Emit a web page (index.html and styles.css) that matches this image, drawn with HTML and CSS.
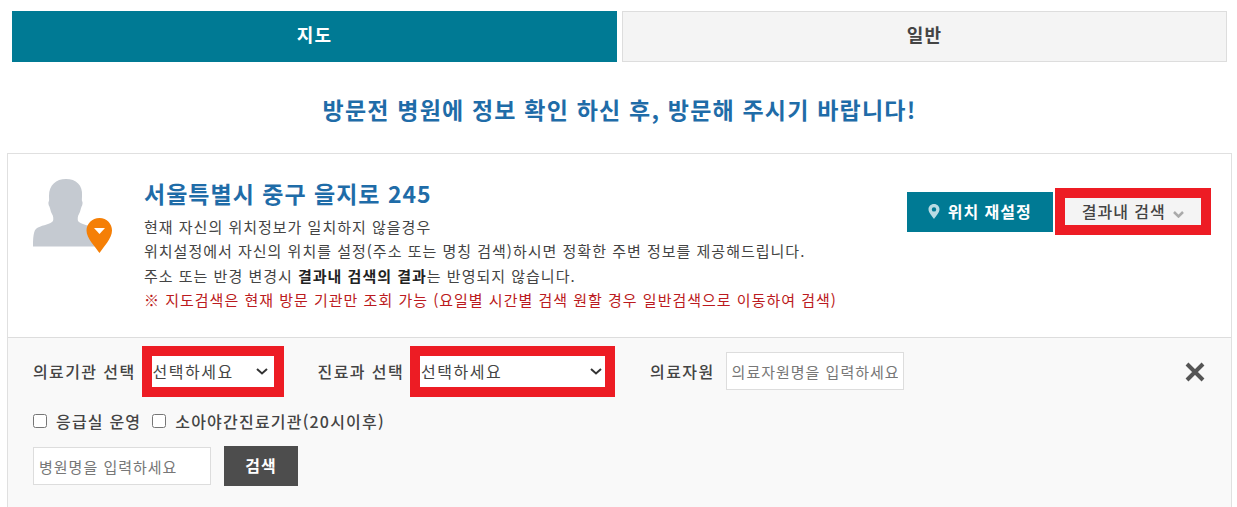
FILE: index.html
```html
<!DOCTYPE html>
<html lang="ko">
<head>
<meta charset="utf-8">
<title>병원 찾기</title>
<link rel="stylesheet" href="styles.css">
</head>
<body>
<div class="tabs">
  <a class="tab tab-active">지도</a>
  <a class="tab">일반</a>
</div>
<h2 class="notice">방문전 병원에 정보 확인 하신 후, 방문해 주시기 바랍니다!</h2>
<section class="card">
  <div class="location">
    <div class="avatar">
      <svg width="80" height="74" viewBox="0 0 80 74">
        <path fill="#c5cad1" d="M33 0C23 0 16 6 16 17c0 2 .3 4 0 5-1 1-.6 4 .4 5.500 1 2 1 5 2.600 7.500 1.500 2.500 1.500 5 1 7-2 3-10 4-15 6.500C1.500 50 0 54 0 67.500h66C66 54 64.500 50 60 48.500c-5-2.500-13-3.500-15-6.500-.5-2-.5-4.500 1-7 1.600-2.500 1.600-5.500 2.600-7.500 1-1.500 1.400-4.500.4-5.500-.3-1 0-3 0-5C50 6 43 0 33 0z"/>
        <path fill="#f57f06" d="M66.500 39C59 39 53.500 45 53.500 51.500c0 8 9 16.500 13 22.500 4-6 12.500-14.500 12.500-22.500C79 45 74 39 66.500 39z"/>
        <path fill="#fff" d="M61 49h11l-5.500 6z"/>
      </svg>
    </div>
    <div class="info">
      <h3 class="address">서울특별시 중구 을지로 245</h3>
      <p class="line">현재 자신의 위치정보가 일치하지 않을경우</p>
      <p class="line">위치설정에서 자신의 위치를 설정(주소 또는 명칭 검색)하시면 정확한 주변 정보를 제공해드립니다.</p>
      <p class="line">주소 또는 반경 변경시 <strong>결과내 검색의 결과</strong>는 반영되지 않습니다.</p>
      <p class="line line-red">※ 지도검색은 현재 방문 기관만 조회 가능 (요일별 시간별 검색 원할 경우 일반검색으로 이동하여 검색)</p>
    </div>
    <div class="actions">
      <button class="btn-reset" type="button">
        <svg width="12" height="15" viewBox="0 0 12 15"><path fill="#b9dbe3" fill-rule="evenodd" d="M6 0C2.700 0 .5 2.500.5 5.300.5 9 4.500 12.500 6 15c1.500-2.500 5.500-6 5.500-9.700C11.500 2.500 9.300 0 6 0zm0 3.200a2.200 2.200 0 1 1 0 4.400 2.200 2.200 0 0 1 0-4.400z"/></svg>
        위치 재설정
      </button>
      <button class="btn-result" type="button">
        결과내 검색
        <svg width="11" height="7" viewBox="0 0 11 7"><path fill="none" stroke="#aaa" stroke-width="2.500" d="M1 1l4.500 4.500L10 1"/></svg>
      </button>
    </div>
  </div>
  <form class="filters">
    <div class="filter-row">
      <label class="filter-label">의료기관 선택</label>
      <select class="select select-org"><option>선택하세요</option></select>
      <label class="filter-label label-dept">진료과 선택</label>
      <select class="select select-dept"><option>선택하세요</option></select>
      <label class="filter-label label-staff">의료자원</label>
      <input class="text-input input-staff" type="text" placeholder="의료자원명을 입력하세요">
      <span class="close">
        <svg width="20" height="20" viewBox="0 0 20 20"><path stroke="#555" stroke-width="4" d="M2 2l16 16M18 2L2 18"/></svg>
      </span>
    </div>
    <div class="check-row">
      <label class="check"><input type="checkbox">응급실 운영</label>
      <label class="check"><input type="checkbox">소아야간진료기관(20시이후)</label>
    </div>
    <div class="search-row">
      <input class="text-input input-name" type="text" placeholder="병원명을 입력하세요">
      <button class="btn-search" type="button">검색</button>
    </div>
  </form>
</section>
</body>
</html>
```
FILE: styles.css
```css
* { box-sizing: border-box; }
html, body { height: 100%; overflow: hidden; }
body {
  margin: 0;
  padding: 11px 5px 0 7px;
  background: #fff;
  color: #444;
  font-family: "Noto Sans CJK KR", "Noto Sans", sans-serif;
  font-size: 14px;
}
.tabs { display: flex; gap: 5px; padding: 0 5px; }
.tab {
  flex: 1;
  height: 51px;
  display: flex;
  align-items: center;
  justify-content: center;
  padding-bottom: 5px;
  background: #f4f4f4;
  border: 1px solid #ddd;
  color: #444;
  font-size: 18px;
  letter-spacing: 1.300px;
  font-weight: 700;
}
.tab-active { background: #007a94; border-color: #007a94; color: #fff; }
.notice {
  margin: 0;
  height: 91px;
  padding-top: 31px;
  text-align: center;
  color: #1f6ca8;
  font-size: 23px;
  letter-spacing: 1.200px;
  line-height: 32px;
  font-weight: 700;
}
.card { border: 1px solid #e0e0e0; border-bottom: 0; height: 354px; }
.location {
  display: flex;
  height: 184px;
  padding: 25px 20px 0 25px;
  border-bottom: 1px solid #ddd;
}
.avatar { width: 111px; flex: none; }
.avatar svg { display: block; }
.info { flex: 1; }
.address {
  margin: -2px 0 6px;
  color: #1f6ca8;
  font-size: 23px;
  letter-spacing: 1px;
  line-height: 32px;
  font-weight: 700;
}
.line { margin: 0; font-size: 15px; letter-spacing: 1px; line-height: 24.300px; color: #444; white-space: nowrap; }
.line strong { color: #222; }
.line-red { color: #bb1a20; }
.actions { display: flex; align-items: center; gap: 2px; height: 47px; margin-top: 9px; }
.btn-reset {
  width: 146px;
  height: 40px;
  border: 0;
  padding: 0 0 2px;
  background: #007a94;
  color: #fff;
  font: 700 16px "Noto Sans CJK KR", sans-serif;
  letter-spacing: 1px;
}
.btn-reset svg { margin-right: 2px; vertical-align: -1px; }
.btn-result {
  width: 156px;
  height: 47px;
  border: 10px solid #ed1c24;
  background: #f4f4f4;
  color: #444;
  font: 500 16px "Noto Sans CJK KR", sans-serif;
  letter-spacing: 1px;
  padding: 0 0 2px;
}
.btn-result svg { margin-left: 2px; }
.filters { background: #f9f9f9; height: 169px; padding: 7px 25px 0; }
.filter-row { display: flex; align-items: center; height: 52px; }
.filter-label { font-size: 16px; letter-spacing: 1.400px; font-weight: 500; color: #444; white-space: nowrap; }
.select {
  appearance: none;
  height: 51px;
  border: 10px solid #ed1c24;
  border-radius: 0;
  outline: 0;
  background-color: #fff;
  background-image: url("data:image/svg+xml,%3Csvg xmlns='http://www.w3.org/2000/svg' width='12' height='7' viewBox='0 0 12 7'%3E%3Cpath fill='none' stroke='%23333' stroke-width='2' d='M1 1l5 4.500L11 1'/%3E%3C/svg%3E");
  background-repeat: no-repeat;
  color: #444;
  font: 16px "Noto Sans CJK KR", sans-serif;
  letter-spacing: 1.500px;
  padding: 0 0 0 1px;
}
.select-org { width: 142px; margin-left: 6px; background-position: right 6px center; }
.label-dept { margin-left: 34px; }
.select-dept { width: 205px; margin-left: 6px; background-position: right 3px center; }
.label-staff { margin-left: 35px; }
.text-input {
  border: 1px solid #ddd;
  background: #fff;
  padding: 0 5px;
  font: 15px "Noto Sans CJK KR", sans-serif;
  letter-spacing: 1px;
  color: #444;
}
.text-input::placeholder { color: #777; opacity: 1; }
.input-staff { width: 178px; height: 38px; margin-left: 11px; }
.close { margin: 2px 1px 0 auto; display: flex; }
.check-row { display: flex; gap: 11px; margin-top: 10px; height: 28px; align-items: center; }
.check { display: flex; align-items: center; font-size: 16px; letter-spacing: 1.200px; font-weight: 500; color: #444; }
.check input { width: 14px; height: 14px; margin: 0 9px 0 0; }
.search-row { display: flex; align-items: center; gap: 13px; margin-top: 11px; }
.input-name { width: 178px; height: 38px; }
.btn-search {
  width: 74px;
  height: 40px;
  border: 0;
  padding: 0 0 2px;
  background: #4d4d4d;
  color: #fff;
  font: 700 16px "Noto Sans CJK KR", sans-serif;
  letter-spacing: 1px;
}
```
